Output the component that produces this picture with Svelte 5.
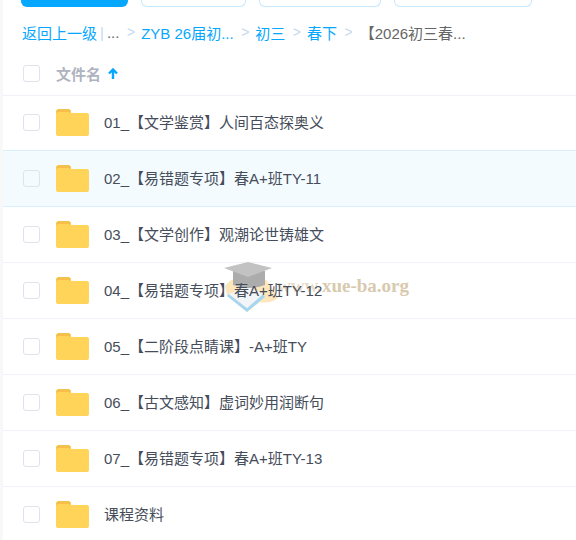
<script>
  const rows = [
    '01_【文学鉴赏】人间百态探奥义',
    '02_【易错题专项】春A+班TY-11',
    '03_【文学创作】观潮论世铸雄文',
    '04_【易错题专项】春A+班TY-12',
    '05_【二阶段点睛课】-A+班TY',
    '06_【古文感知】虚词妙用润断句',
    '07_【易错题专项】春A+班TY-13',
    '课程资料'
  ];
</script>

<div class="page">
  <div class="tabs">
    <div class="tab primary"></div>
    <div class="tab t2"></div>
    <div class="tab t3"></div>
    <div class="tab t4"></div>
  </div>
  <nav class="crumbs">
    <span class="link">返回上一级</span>
    <span class="bar">|</span>
    <span class="dots">...</span>
    <span class="sep">&gt;</span>
    <span class="link">ZYB 26届初...</span>
    <span class="sep">&gt;</span>
    <span class="link">初三</span>
    <span class="sep">&gt;</span>
    <span class="link">春下</span>
    <span class="sep">&gt;</span>
    <span class="current">【2026初三春...</span>
  </nav>
  <div class="head">
    <span class="check"></span>
    <span class="title">文件名</span>
    <svg class="arrow" width="10" height="11" viewBox="0 0 10 11"><path d="M5 11V2M1 5.5l4-4 4 4" fill="none" stroke="#06a7ff" stroke-width="2.4"/></svg>
  </div>
  <div class="list">
    {#each rows as name, i}
      <div class="row" class:hover={i === 1}>
        <span class="check"></span>
        <svg class="folder" width="33" height="27" viewBox="0 0 33 27">
          <path d="M0 3a3 3 0 0 1 3-3h9a3 3 0 0 1 3 3v2H0z" fill="#f5c04a"/>
          <path d="M0 5a2 2 0 0 1 2-2h10l3 1h16a2 2 0 0 1 2 2v19a2 2 0 0 1-2 2H2a2 2 0 0 1-2-2z" fill="#ffd459"/>
        </svg>
        <span class="name">{name}</span>
      </div>
    {/each}
  </div>
  <div class="mark" aria-hidden="true">
    <svg width="56" height="52" viewBox="0 0 56 52">
      <path d="M1 24 Q6 17 14 16 L42 18 Q50 28 54 36 Q46 42 36 40 L23 50 L3 34 Z" fill="#fde6bb"/>
      <path d="M3 34 L23 50 L41 35 L39 32 L23 46 L5 32 Z" fill="#a6d6f0"/>
      <path d="M5 32 L23 46 L39 32 L24 24 Z" fill="#f2f5f7"/>
      <path d="M9 9 L9 23 Q24 29 41 23 L41 9 Z" fill="#acacac"/>
      <path d="M0 6 L24 0 L48 6 L24 15 Z" fill="#c2c2c2"/>
    </svg>
    <span class="site"><span class="www">www</span>.xue-ba.org</span>
  </div>
</div>

<style>
  :global(body) { margin: 0; background: #fff; }
  .page {
    position: relative;
    width: 576px;
    height: 540px;
    overflow: hidden;
    box-sizing: border-box;
    border-left: 3px solid #f8f8f8;
    font-family: "Liberation Sans", "Noto Sans CJK SC", sans-serif;
    font-size: 15px;
  }
  .tabs { display: flex; gap: 13px; height: 7px; padding-left: 18px; }
  .tab {
    box-sizing: border-box;
    height: 7px;
    border: 1px solid #c5e9ff;
    border-top: 0;
    border-radius: 0 0 6px 6px;
  }
  .primary { width: 107px; background: #06a7ff; border: 0; }
  .t2 { width: 105px; }
  .t3 { width: 122px; }
  .t4 { width: 138px; }
  .crumbs {
    display: flex;
    align-items: center;
    height: 20px;
    margin-top: 15px;
    padding-left: 19px;
    white-space: nowrap;
  }
  .link { color: #06a7ff; }
  .bar { color: #c5d8f0; margin-left: 3px; }
  .dots { color: #666; margin-left: 3px; }
  .sep { color: #c5d8f0; margin: 0 6px 0 7.5px; font-size: 14px; }
  .current { color: #666; margin-left: 1px; }
  .head {
    display: flex;
    align-items: center;
    height: 43px;
    padding: 10px 0 0 20px;
    border-bottom: 1px solid #f1f2f8;
  }
  .title { margin-left: 16px; color: #afb3bf; font-weight: 700; }
  .arrow { margin-left: 7px; }
  .check {
    box-sizing: border-box;
    flex: none;
    width: 17px;
    height: 17px;
    border: 1px solid #dfe3eb;
    border-radius: 3px;
    background: #fff;
  }
  .list { margin-top: -1px; }
  .row {
    box-sizing: border-box;
    display: flex;
    align-items: center;
    height: 56px;
    padding-left: 20px;
    border-bottom: 1px solid #f1f2f8;
    color: #454d5a;
  }
  .row.hover { background: #f4fbff; border-bottom-color: #d9efff; box-shadow: 0 -1px 0 #d9efff; }
  .hover .check { background: #f4fbff; }
  .folder { flex: none; margin: 0 0 0 16px; }
  .name { position: relative; z-index: 2; margin: 0 0 3px 15px; white-space: nowrap; }
  .mark {
    position: absolute;
    z-index: 1;
    left: 221px;
    top: 262px;
    width: 200px;
    height: 60px;
    pointer-events: none;
  }
  .mark svg { position: absolute; left: 0; top: 0; }
  .site {
    position: absolute;
    left: 53px;
    top: 13px;
    font-family: "Liberation Serif", serif;
    font-size: 19px;
    font-weight: 700;
    color: #d8caaf;
    white-space: nowrap;
  }
  .www { color: #e6dcc8; }
</style>
